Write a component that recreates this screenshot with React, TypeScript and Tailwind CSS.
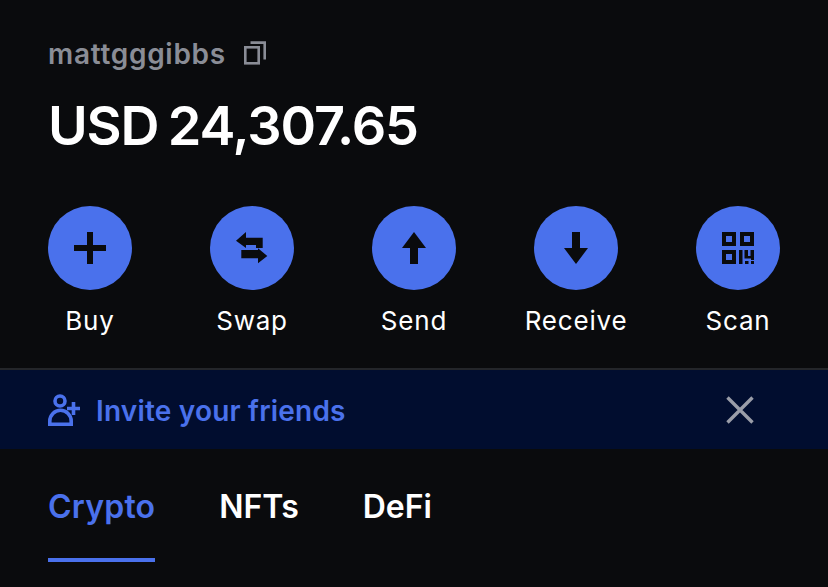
import { ReactNode } from 'react';

const font = { fontFamily: 'Inter, "Noto Sans", sans-serif' };

function PlusIcon() {
	return (
		<svg width="32" height="32" viewBox="0 0 32 32" fill="#0a0b0d">
			<path d="M13 0h6v13h13v6H19v13h-6V19H0v-6h13z" />
		</svg>
	);
}

function SwapIcon() {
	return (
		<svg width="32" height="32" viewBox="0 0 32 32" fill="#0a0b0d">
			<path d="M0 8.700 10 0v5.700h16.700V16H20V13H10v3z" />
			<path d="M5.300 18H22v-1.700L31.300 24 22 31.300v-5H5.300z" />
		</svg>
	);
}

function UpIcon() {
	return (
		<svg width="32" height="32" viewBox="0 0 32 32" fill="#0a0b0d">
			<path d="M16 0 28 16h-8v16h-8V16H4z" />
		</svg>
	);
}

function DownIcon() {
	return (
		<svg width="32" height="32" viewBox="0 0 32 32" fill="#0a0b0d">
			<path d="M16 32 4 16h8V0h8v16h8z" />
		</svg>
	);
}

function QrIcon() {
	return (
		<svg width="32" height="32" viewBox="0 0 32 32" fill="#0a0b0d" fillRule="evenodd">
			<path d="M0 0h14v14H0zM4 4v6h6V4z" />
			<path d="M18 0h14v14H18zM22 4v6h6V4z" />
			<path d="M0 18h14v14H0zM4 22v6h6v-6z" />
			<path d="M17 18h3.500v14H17zM22.500 18H26v6h2.500v-6H32v10h-3v-1.500h-6.500z" />
			<path d="M23 29h3.500v3H23zM29 29h3v3h-3z" />
		</svg>
	);
}

function InviteIcon() {
	return (
		<svg width="32" height="32" viewBox="0 0 32 32" fill="none" stroke="#4a71ec" strokeWidth="3.600">
			<circle cx="12" cy="7" r="5" />
			<path d="M1.800 30.200V27a10.700 10.700 0 0 1 21.400 0v3.200z" />
			<path d="M19 14.500h13M25.500 8v13" />
		</svg>
	);
}

function CopyIcon() {
	return (
		<svg width="22" height="24" viewBox="0 0 22 24" fill="none" stroke="#8a8d96" strokeWidth="2.600">
			<rect x="1.300" y="6.300" width="13.400" height="16" />
			<path d="M6.500 1.600h14.200v17" />
		</svg>
	);
}

function CloseIcon() {
	return (
		<svg width="30" height="30" viewBox="0 0 30 30" fill="none" stroke="#9a9da8" strokeWidth="3.400">
			<path d="M2.500 2.500l25 25M27.500 2.500l-25 25" />
		</svg>
	);
}

const ACTIONS: { label: string; icon: ReactNode }[] = [
	{ label: 'Buy', icon: <PlusIcon /> },
	{ label: 'Swap', icon: <SwapIcon /> },
	{ label: 'Send', icon: <UpIcon /> },
	{ label: 'Receive', icon: <DownIcon /> },
	{ label: 'Scan', icon: <QrIcon /> },
];

export default function App() {
	return (
		<div style={font} className="w-[828px] h-[587px] overflow-hidden bg-[#0a0b0d] flex flex-col">
			<div className="px-12 pt-[36px]">
				<div className="flex items-center gap-[18px] h-[36px]">
					<span className="text-[28px] leading-[36px] font-semibold tracking-[0.700px] text-[#8a8d96]">
						mattgggibbs
					</span>
					<div className="mb-[3px]">
						<CopyIcon />
					</div>
				</div>
				<div className="mt-[23px] h-[61px] text-[54px] leading-[62px] font-semibold tracking-[-1.150px] [word-spacing:-3px] text-white">
					USD 24,307.65
				</div>
			</div>

			<div className="flex justify-between px-12 mt-[50px]">
				{ACTIONS.map((a) => (
					<div key={a.label} className="w-[84px] flex flex-col items-center">
						<div className="w-[84px] h-[84px] rounded-full bg-[#4a71ec] flex items-center justify-center">
							{a.icon}
						</div>
						<span className="mt-[14px] h-[34px] text-[26px] leading-[34px] tracking-[0.800px] text-white whitespace-nowrap">
							{a.label}
						</span>
					</div>
				))}
			</div>

			<div className="mt-[30px] h-[81px] border-t-2 border-[#24262a] bg-[#010d2f] flex items-center pl-12 pr-[73px]">
				<InviteIcon />
				<span className="ml-[16px] mt-[2px] text-[28px] font-semibold tracking-[0.200px] text-[#4a71ec]">
					Invite your friends
				</span>
				<div className="ml-auto">
					<CloseIcon />
				</div>
			</div>

			<div className="flex px-12 mt-[36px] gap-[64px]">
				<div className="flex flex-col">
					<span className="h-[44px] text-[32px] leading-[44px] font-semibold tracking-[0.200px] text-[#4a71ec]">
						Crypto
					</span>
					<div className="mt-[29px] h-[4px] bg-[#4a71ec]" />
				</div>
				<span className="h-[44px] text-[32px] leading-[44px] font-semibold text-white">NFTs</span>
				<span className="h-[44px] text-[32px] leading-[44px] font-semibold text-white">DeFi</span>
			</div>
		</div>
	);
}
